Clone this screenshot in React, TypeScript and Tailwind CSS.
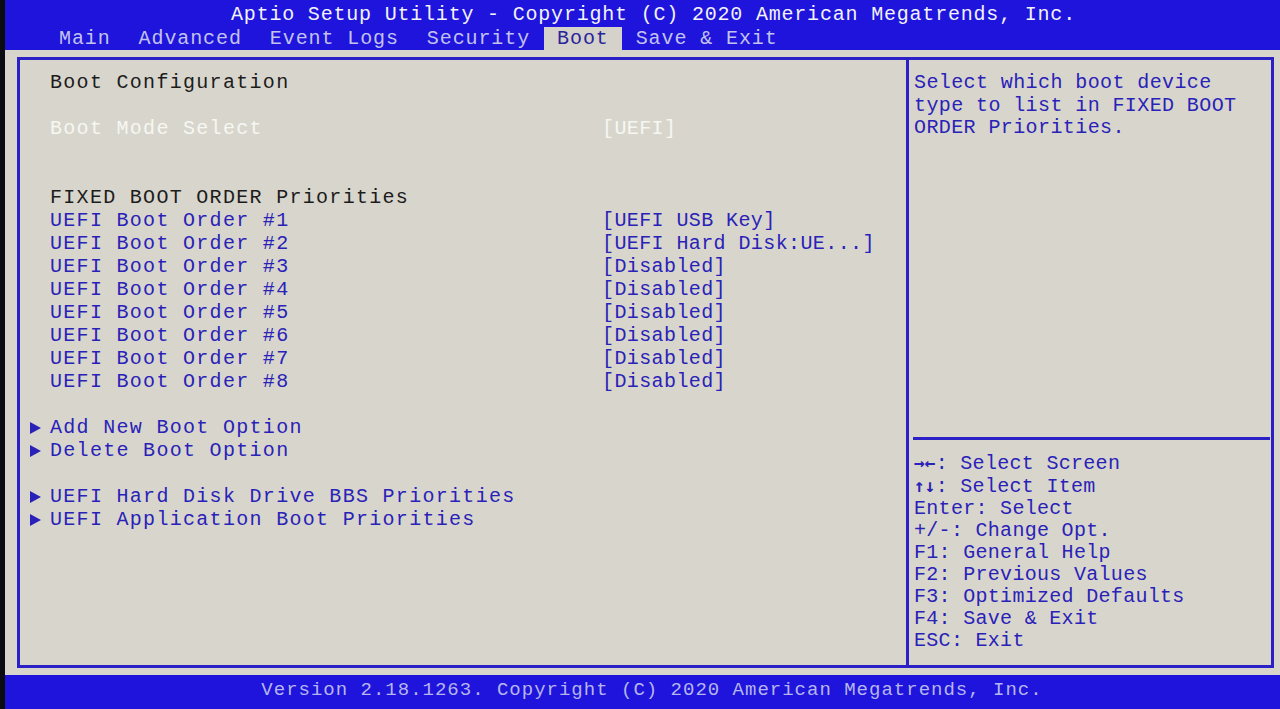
import React from "react";

const Arrow = () => (
  <svg width="11" height="12" viewBox="0 0 11 12" className="block">
    <polygon points="0,0 11,6 0,12" fill="#2a22b8" />
  </svg>
);

type Row =
  | { kind: "blank" }
  | { kind: "title"; text: string }
  | { kind: "item"; text: string; value?: string; selected?: boolean }
  | { kind: "sub"; text: string };

const rows: Row[] = [
  { kind: "title", text: "Boot Configuration" },
  { kind: "blank" },
  { kind: "item", text: "Boot Mode Select", value: "[UEFI]", selected: true },
  { kind: "blank" },
  { kind: "blank" },
  { kind: "title", text: "FIXED BOOT ORDER Priorities" },
  { kind: "item", text: "UEFI Boot Order #1", value: "[UEFI USB Key]" },
  { kind: "item", text: "UEFI Boot Order #2", value: "[UEFI Hard Disk:UE...]" },
  { kind: "item", text: "UEFI Boot Order #3", value: "[Disabled]" },
  { kind: "item", text: "UEFI Boot Order #4", value: "[Disabled]" },
  { kind: "item", text: "UEFI Boot Order #5", value: "[Disabled]" },
  { kind: "item", text: "UEFI Boot Order #6", value: "[Disabled]" },
  { kind: "item", text: "UEFI Boot Order #7", value: "[Disabled]" },
  { kind: "item", text: "UEFI Boot Order #8", value: "[Disabled]" },
  { kind: "blank" },
  { kind: "sub", text: "Add New Boot Option" },
  { kind: "sub", text: "Delete Boot Option" },
  { kind: "blank" },
  { kind: "sub", text: "UEFI Hard Disk Drive BBS Priorities" },
  { kind: "sub", text: "UEFI Application Boot Priorities" },
];

const tabs = ["Main", "Advanced", "Event Logs", "Security", "Boot", "Save & Exit"];

const help: [string, string][] = [
  ["→←", ": Select Screen"],
  ["↑↓", ": Select Item"],
  ["", "Enter: Select"],
  ["", "+/-: Change Opt."],
  ["", "F1: General Help"],
  ["", "F2: Previous Values"],
  ["", "F3: Optimized Defaults"],
  ["", "F4: Save & Exit"],
  ["", "ESC: Exit"],
];

export default function App() {
  return (
    <div className="w-[1280px] h-[709px] bg-[#0b0b12] pl-[5px] flex flex-col overflow-hidden font-['Liberation_Mono',monospace] text-[20px] whitespace-pre">
      {/* Top bar */}
      <div className="bg-[#1e14dc] h-[50px] flex flex-col shrink-0">
        <div className="h-[27px] flex items-center justify-center pl-[22px] pt-[2px] text-[#f2f2fa] tracking-[0.8px] leading-none">
          Aptio Setup Utility - Copyright (C) 2020 American Megatrends, Inc.
        </div>
        <div className="h-[23px] flex pl-[40px] tracking-[0.9px] leading-[23px]">
          {tabs.map((t) =>
            t === "Boot" ? (
              <div key={t} className="px-[13px] bg-[#d4d2ca] text-[#2a249a]">
                {t}
              </div>
            ) : (
              <div key={t} className="px-[14px] text-[#c2c2ee]">
                {t}
              </div>
            )
          )}
        </div>
      </div>

      {/* Grey body */}
      <div className="flex-1 bg-[#d8d6cc] flex flex-col">
        <div className="mt-[7px] ml-[12px] mr-[6px] h-[611px] border-[3px] border-[#2b20c6] flex">
          {/* Left panel */}
          <div className="w-[889px] border-r-[3px] border-[#2b20c6] pt-[11px] pl-[4px] flex flex-col">
            {rows.map((r, i) => {
              if (r.kind === "blank") return <div key={i} className="h-[23px]" />;
              if (r.kind === "title")
                return (
                  <div key={i} className="h-[23px] leading-[23px] flex">
                    <div className="w-[26px]" />
                    <div className="text-[#1c1c1c] tracking-[1.3px]">{r.text}</div>
                  </div>
                );
              if (r.kind === "sub")
                return (
                  <div key={i} className="h-[23px] leading-[23px] flex items-center">
                    <div className="w-[26px] flex items-center pl-[6px]">
                      <Arrow />
                    </div>
                    <div className="text-[#2a22b8] tracking-[1.3px]">{r.text}</div>
                  </div>
                );
              const color = r.selected ? "text-[#f6f6f2]" : "text-[#2a22b8]";
              return (
                <div key={i} className="h-[23px] leading-[23px] flex">
                  <div className="w-[26px]" />
                  <div className={`w-[552px] tracking-[1.3px] ${color}`}>{r.text}</div>
                  <div className={`tracking-[0.4px] ${color}`}>{r.value}</div>
                </div>
              );
            })}
          </div>

          {/* Right panel */}
          <div className="flex-1 flex flex-col">
            <div className="h-[377px] pt-[12px] pl-[5px] text-[#2a22b8] tracking-[0.4px] leading-[22.5px]">
              <div>Select which boot device</div>
              <div>type to list in FIXED BOOT</div>
              <div>ORDER Priorities.</div>
            </div>
            <div className="h-[3px] ml-[4px] mr-[1px] bg-[#2b20c6]" />
            <div className="pt-[12px] pl-[5px] text-[#2a22b8] tracking-[0.3px] leading-[22px]">
              {help.map(([k, t], i) => (
                <div key={i}>
                  {k && (
                    <span className="font-['DejaVu_Sans_Mono',monospace] font-bold text-[18px] tracking-[0px]">
                      {k}
                    </span>
                  )}
                  {t}
                </div>
              ))}
            </div>
          </div>
        </div>
        <div className="flex-1" />
        {/* Bottom bar */}
        <div className="h-[34px] bg-[#1e14dc] flex justify-center pl-[19px] pt-[4px] text-[#b6b6ee] text-[19px] tracking-[1px] leading-[22px] shrink-0">
          Version 2.18.1263. Copyright (C) 2020 American Megatrends, Inc.
        </div>
      </div>
    </div>
  );
}
